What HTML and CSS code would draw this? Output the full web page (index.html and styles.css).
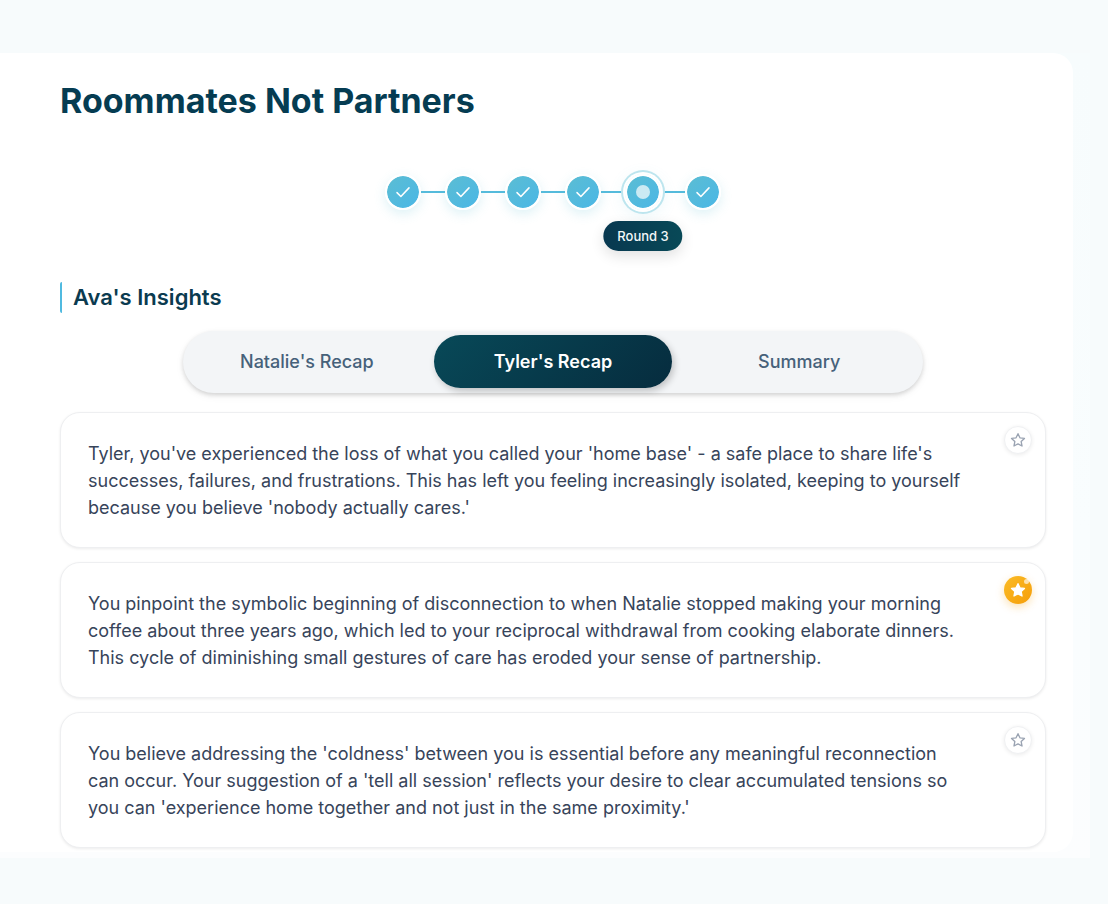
FILE: index.html
```html
<!DOCTYPE html>
<html lang="en">
<head>
<meta charset="utf-8">
<meta name="viewport" content="width=device-width, initial-scale=1">
<title>Roommates Not Partners</title>
<link rel="stylesheet" href="styles.css">
</head>
<body>
<svg class="sprite" aria-hidden="true">
  <symbol id="check" viewBox="0 0 24 24"><path d="M4 12.8 9.2 18 20 6.5" fill="none" stroke="currentColor" stroke-width="2" stroke-linecap="round" stroke-linejoin="round"/></symbol>
  <symbol id="star" viewBox="0 0 24 24"><path d="m12 2.5 2.9 6.2 6.8.9-5 4.6 1.3 6.8-6-3.3L6 21l1.300-6.800-5-4.600 6.800-.9z" stroke="currentColor" stroke-width="2" stroke-linejoin="round"/></symbol>
</svg>
<div class="backdrop">
  <main class="panel">
    <h1 class="title">Roommates Not Partners</h1>

    <ol class="steps">
      <li class="step"><span class="dot"><svg class="check"><use href="#check"/></svg></span></li>
      <li class="step"><span class="dot"><svg class="check"><use href="#check"/></svg></span></li>
      <li class="step"><span class="dot"><svg class="check"><use href="#check"/></svg></span></li>
      <li class="step"><span class="dot"><svg class="check"><use href="#check"/></svg></span></li>
      <li class="step" aria-current="step"><span class="dot dot-current"><span class="core"></span><span class="step-label">Round 3</span></span></li>
      <li class="step"><span class="dot"><svg class="check"><use href="#check"/></svg></span></li>
    </ol>

    <h2 class="section-title">Ava's Insights</h2>

    <div class="tabs" role="tablist">
      <button class="tab" type="button" role="tab" aria-selected="false">Natalie's Recap</button>
      <button class="tab tab-active" type="button" role="tab" aria-selected="true">Tyler's Recap</button>
      <button class="tab" type="button" role="tab" aria-selected="false">Summary</button>
    </div>

    <div class="insights">
      <article class="insight">
        <p class="text">Tyler, you've experienced the loss of what you called your 'home base' - a safe place to share life's successes, failures, and frustrations. This has left you feeling increasingly isolated, keeping to yourself because you believe 'nobody actually cares.'</p>
        <button class="favorite" type="button" aria-label="Add to favorites"><svg class="star"><use href="#star"/></svg></button>
      </article>
      <article class="insight">
        <p class="text">You pinpoint the symbolic beginning of disconnection to when Natalie stopped making your morning coffee about three years ago, which led to your reciprocal withdrawal from cooking elaborate dinners. This cycle of diminishing small gestures of care has eroded your sense of partnership.</p>
        <button class="favorite favorite-on" type="button" aria-label="Remove from favorites"><svg class="star"><use href="#star"/></svg></button>
      </article>
      <article class="insight">
        <p class="text">You believe addressing the 'coldness' between you is essential before any meaningful reconnection can occur. Your suggestion of a 'tell all session' reflects your desire to clear accumulated tensions so you can 'experience home together and not just in the same proximity.'</p>
        <button class="favorite" type="button" aria-label="Add to favorites"><svg class="star"><use href="#star"/></svg></button>
      </article>
    </div>
  </main>
</div>
</body>
</html>
```
FILE: styles.css
```css
* {
  box-sizing: border-box;
}

body {
  margin: 0;
  padding: 53px 18px 46px 0;
  background: #f7fbfc;
  font-family: Inter, "Liberation Sans", sans-serif;
  color: #37445a;
}

.sprite {
  display: none;
}

.backdrop {
  padding: 0 17px 6px 0;
  background: linear-gradient(#f7fcfd, #f9fdfe 60%, #fcfdfe);
}

.panel {
  padding: 28px 27px 4px 60px;
  background: #fff;
  border-radius: 0 20px 20px 0;
}

.title {
  margin: 0;
  font-size: 34px;
  line-height: 40px;
  font-weight: 700;
  color: #053c52;
}

.steps {
  display: flex;
  justify-content: center;
  margin: 53px 0 0;
  padding: 0;
  list-style: none;
}

.step {
  display: flex;
  align-items: center;
}

.step + .step::before {
  content: "";
  width: 24px;
  height: 2px;
  background: #55bbdc;
}

.dot {
  position: relative;
  z-index: 1;
  display: grid;
  place-items: center;
  width: 36px;
  height: 36px;
  border: 2px solid #fff;
  border-radius: 50%;
  background: linear-gradient(135deg, #5bbdd3, #4bb7e6) padding-box;
  box-shadow: 0 4px 12px rgba(91, 189, 211, 0.2);
  color: #fff;
}

.dot-current {
  box-shadow: 0 0 0 2px #fff, 0 0 0 4px #bde5ee, 0 4px 16px 2px rgba(91, 189, 211, 0.12);
}

.check {
  width: 18px;
  height: 18px;
}

.core {
  width: 14px;
  height: 14px;
  border-radius: 50%;
  background: #cbeaf3;
}

.step-label {
  position: absolute;
  top: 100%;
  left: 50%;
  margin-top: 13px;
  padding: 0 14px;
  border-radius: 15px;
  background: linear-gradient(90deg, #083850, #084957);
  box-shadow: 0 5px 14px rgba(0, 0, 0, 0.12);
  color: #f2f7f8;
  font-size: 13px;
  line-height: 30px;
  font-weight: 500;
  white-space: nowrap;
  transform: translateX(-50%);
}

.section-title {
  margin: 72px 0 0;
  padding-left: 11px;
  border-left: 2px solid #50bae0;
  border-radius: 2px;
  font-size: 22px;
  line-height: 31px;
  font-weight: 600;
  color: #0b3b50;
}

.tabs {
  display: grid;
  grid-template-columns: repeat(3, 1fr);
  gap: 9px;
  width: 75%;
  margin: 18px auto 19px;
  padding: 4px 5px 5px;
  border-radius: 31px;
  background: #f3f5f7;
  box-shadow: 0 2px 4px rgba(0, 0, 0, 0.14), 0 3px 10px rgba(0, 0, 0, 0.05);
}

.tab {
  height: 53px;
  padding: 0;
  border: 0;
  border-radius: 27px;
  background: none;
  color: #46617a;
  font: 500 18px/27px Inter, "Liberation Sans", sans-serif;
}

.tab-active {
  background: linear-gradient(135deg, #084958, #062c3e);
  box-shadow: 2px 3px 7px rgba(0, 0, 0, 0.22);
  color: #fff;
  font-weight: 600;
}

.insights {
  display: grid;
  gap: 14px;
}

.insight {
  display: flex;
  align-items: flex-start;
  justify-content: space-between;
  gap: 36px;
  padding: 13px 13px 26px 27px;
  border: 1px solid #eeeff1;
  border-radius: 20px;
  background: #fff;
  box-shadow: 0 1px 3px rgba(0, 0, 0, 0.08);
}

.text {
  flex: 1;
  margin: 14px 0 0;
  font-size: 18px;
  line-height: 27px;
}

.favorite {
  display: grid;
  place-items: center;
  flex: none;
  width: 28px;
  height: 28px;
  padding: 0;
  border: 1px solid #f0f1f3;
  border-radius: 50%;
  background: #fff;
  box-shadow: 0 1px 4px rgba(0, 0, 0, 0.08);
  color: #9aa3b2;
}

.star {
  width: 16px;
  height: 16px;
  fill: none;
}

.favorite-on {
  position: relative;
  border: 0;
  background: linear-gradient(135deg, #fbbb24, #f59e0b);
  box-shadow: 0 3px 8px rgba(245, 158, 11, 0.3);
  color: #fff;
}

.favorite-on .star {
  fill: #fff;
}

.favorite-on::after {
  content: "";
  position: absolute;
  top: 3px;
  right: 3px;
  width: 5px;
  height: 5px;
  border-radius: 50%;
  background: rgba(255, 255, 255, 0.65);
}
```
